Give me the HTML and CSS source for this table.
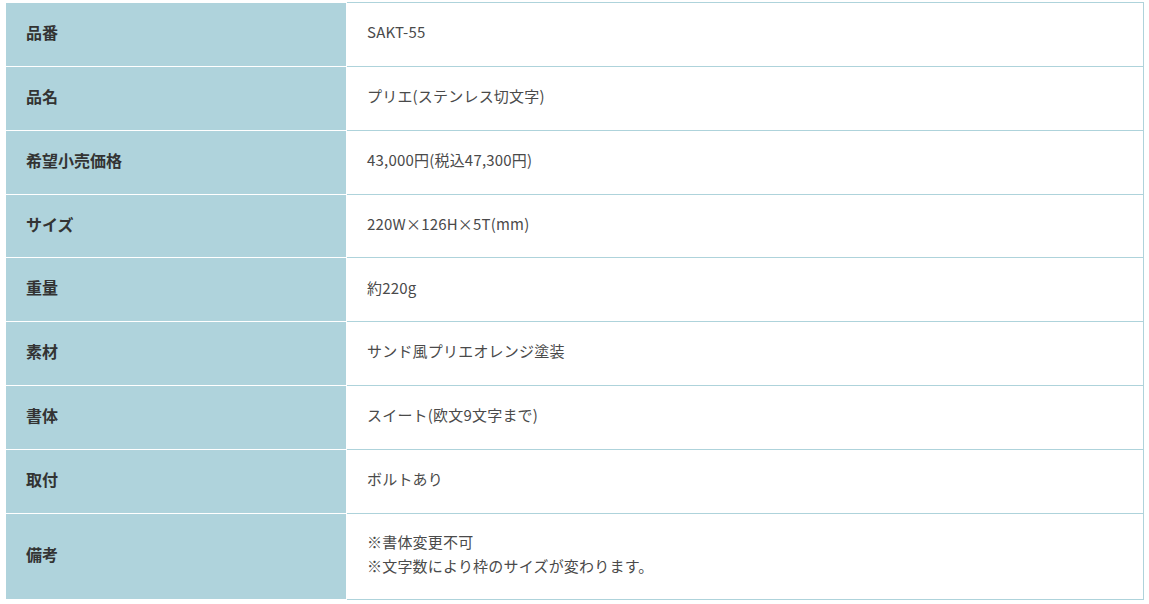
FILE: index.html
```html
<!DOCTYPE html>
<html lang="ja">
<head>
<meta charset="utf-8">
<link rel="stylesheet" href="styles.css">
</head>
<body>
<table class="spec">
  <tbody>
    <tr><th>品番</th><td>SAKT-55</td></tr>
    <tr><th>品名</th><td>プリエ(ステンレス切文字)</td></tr>
    <tr><th>希望小売価格</th><td>43,000円(税込47,300円)</td></tr>
    <tr><th>サイズ</th><td>220W×126H×5T(mm)</td></tr>
    <tr><th>重量</th><td>約220g</td></tr>
    <tr><th>素材</th><td>サンド風プリエオレンジ塗装</td></tr>
    <tr><th>書体</th><td>スイート(欧文9文字まで)</td></tr>
    <tr><th>取付</th><td>ボルトあり</td></tr>
    <tr><th>備考</th><td>※書体変更不可<br>※文字数により枠のサイズが変わります。</td></tr>
  </tbody>
</table>
</body>
</html>
```

FILE: styles.css
```css
html, body {
  margin: 0;
  padding: 0;
  background: #ffffff;
}
body {
  font-family: "Noto Sans CJK JP", "Noto Sans", sans-serif;
}
.spec {
  border-collapse: collapse;
  width: 1139px;
  margin: 2px 0 0 5px;
  table-layout: fixed;
}
.spec th,
.spec td {
  text-align: left;
  vertical-align: middle;
  padding: 16px 20px 20px;
}
.spec th {
  width: 300px;
  background: #afd3dc;
  color: #333333;
  font-weight: bold;
  font-size: 16px;
  line-height: 26.86px;
  border: 1px solid #ffffff;
}
.spec td {
  background: #ffffff;
  color: #4a4a4a;
  font-size: 15px;
  line-height: 24.5px;
  letter-spacing: 0.2px;
  border: 1px solid #aed3db;
}
```
